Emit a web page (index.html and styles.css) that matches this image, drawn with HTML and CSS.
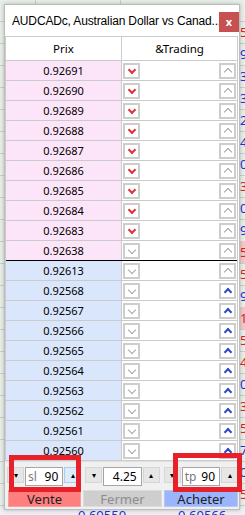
FILE: index.html
```html
<!DOCTYPE html>
<html lang="fr">
<head>
  <meta charset="UTF-8">
  <meta name="viewport" content="width=device-width, initial-scale=1.0">
  <title>AUDCADc</title>
  <link rel="stylesheet" href="styles.css">
</head>
<body>
  <div class="backdrop">
    <div class="sheet"></div>
    <div class="ticks">
      <span class="r">5</span><span class="b">9</span><span class="b">3</span><span class="b">3</span>
      <span class="b">2</span><span class="b">4</span><span class="b">0</span><span class="r">3</span>
      <span class="b">0</span><span class="b">9</span><span class="r hl">5</span><span class="r">5</span>
      <span class="b">9</span><span class="r hl">1</span><span class="r">5</span><span class="r">4</span>
      <span class="b">0</span><span class="r">3</span><span class="r">5</span><span class="b">7</span>
      <span class="b">0</span><span class="r">5</span><span class="b">2</span>
    </div>
    <div class="foot">
      <span>0.69550</span>
      <span>0.69566</span>
    </div>
  </div>

  <div class="window">
    <div class="titlebar">
      <span class="title">AUDCADc, Australian Dollar vs Canad...</span>
      <button class="close">x</button>
    </div>

    <div class="book">
      <div class="row head">
        <div class="price">Prix</div>
        <div class="trade">&amp;Trading</div>
      </div>

      <div class="row bid"><div class="price">0.92691</div><div class="trade"><i class="box dn red"></i><i class="box up gray"></i></div></div>
      <div class="row bid"><div class="price">0.92690</div><div class="trade"><i class="box dn red"></i><i class="box up gray"></i></div></div>
      <div class="row bid"><div class="price">0.92689</div><div class="trade"><i class="box dn red"></i><i class="box up gray"></i></div></div>
      <div class="row bid"><div class="price">0.92688</div><div class="trade"><i class="box dn red"></i><i class="box up gray"></i></div></div>
      <div class="row bid"><div class="price">0.92687</div><div class="trade"><i class="box dn red"></i><i class="box up gray"></i></div></div>
      <div class="row bid"><div class="price">0.92686</div><div class="trade"><i class="box dn red"></i><i class="box up gray"></i></div></div>
      <div class="row bid"><div class="price">0.92685</div><div class="trade"><i class="box dn red"></i><i class="box up gray"></i></div></div>
      <div class="row bid"><div class="price">0.92684</div><div class="trade"><i class="box dn red"></i><i class="box up gray"></i></div></div>
      <div class="row bid"><div class="price">0.92683</div><div class="trade"><i class="box dn red"></i><i class="box up gray"></i></div></div>
      <div class="row bid split"><div class="price">0.92638</div><div class="trade"><i class="box dn gray"></i><i class="box up gray"></i></div></div>

      <div class="row ask"><div class="price">0.92613</div><div class="trade"><i class="box dn gray"></i><i class="box up gray"></i></div></div>
      <div class="row ask"><div class="price">0.92568</div><div class="trade"><i class="box dn gray"></i><i class="box up blue"></i></div></div>
      <div class="row ask"><div class="price">0.92567</div><div class="trade"><i class="box dn gray"></i><i class="box up blue"></i></div></div>
      <div class="row ask"><div class="price">0.92566</div><div class="trade"><i class="box dn gray"></i><i class="box up blue"></i></div></div>
      <div class="row ask"><div class="price">0.92565</div><div class="trade"><i class="box dn gray"></i><i class="box up blue"></i></div></div>
      <div class="row ask"><div class="price">0.92564</div><div class="trade"><i class="box dn gray"></i><i class="box up blue"></i></div></div>
      <div class="row ask"><div class="price">0.92563</div><div class="trade"><i class="box dn gray"></i><i class="box up blue"></i></div></div>
      <div class="row ask"><div class="price">0.92562</div><div class="trade"><i class="box dn gray"></i><i class="box up blue"></i></div></div>
      <div class="row ask"><div class="price">0.92561</div><div class="trade"><i class="box dn gray"></i><i class="box up blue"></i></div></div>
      <div class="row ask"><div class="price">0.92560</div><div class="trade"><i class="box dn gray"></i><i class="box up blue"></i></div></div>
    </div>

    <div class="panel">
      <div class="spinners">
        <div class="spin">
          <button class="step">&#9662;</button>
          <div class="field"><span class="tag">sl</span><span class="val">90</span></div>
          <button class="step hot">&#9652;</button>
        </div>
        <div class="spin">
          <button class="step">&#9662;</button>
          <div class="field"><span class="val">4.25</span></div>
          <button class="step">&#9652;</button>
        </div>
        <div class="spin">
          <button class="step">&#9662;</button>
          <div class="field"><span class="tag">tp</span><span class="val">90</span></div>
          <button class="step">&#9652;</button>
        </div>
      </div>
      <div class="actions">
        <button class="act sell">Vente</button>
        <button class="act close-pos">Fermer</button>
        <button class="act buy">Acheter</button>
      </div>
    </div>
  </div>

  <div class="mark mark-sl"></div>
  <div class="mark mark-tp"></div>
</body>
</html>
```

FILE: styles.css
```css
body {
  margin: 0;
  width: 245px;
  height: 515px;
  overflow: hidden;
  font-family: 'Noto Sans', 'Liberation Sans', sans-serif;
  color: #000;
  background-color: #e8eee8;
}

button {
  font-family: inherit;
  padding: 0;
  margin: 0;
}


/* chart behind the window */
.backdrop {
  display: grid;
  grid-template-columns: 240px 1fr;
  grid-template-rows: 508px 7px;
  height: 515px;
  background-image: repeating-linear-gradient(to bottom, transparent 0, transparent 21px, #c9cfc9 21px, #c9cfc9 22px);
}

.sheet {
  background-image: linear-gradient(to right, transparent 35px, #c9cfc9 35px, #c9cfc9 36px, transparent 36px, transparent 120px, #c9cfc9 120px, #c9cfc9 121px, transparent 121px);
}

.ticks {
  display: flex;
  flex-direction: column;
  padding-top: 21px;
  font-size: 13px;
  line-height: 22px;
  overflow: hidden;
}

.ticks .r {
  color: #e02020;
}

.ticks .b {
  color: #2030d8;
}

.ticks .hl {
  background-color: #f1c9c9;
}

.foot {
  grid-column: 1 / 3;
  display: flex;
  gap: 52px;
  padding-left: 78px;
  font-size: 13px;
  line-height: 14px;
  color: #2030d8;
  background-color: #eef0f6;
}


/* terminal window */
.window {
  position: absolute;
  left: 4px;
  top: 4px;
  width: 236px;
  height: 506px;
  box-sizing: border-box;
  display: flex;
  flex-direction: column;
  background-color: #fff;
  border: 1px solid #bdbdbd;
  box-shadow: 0 0 4px rgba(0, 0, 0, 0.25);
}

.titlebar {
  display: flex;
  align-items: center;
  height: 31px;
  padding-left: 7px;
}

.title {
  flex: 1;
  min-width: 0;
  overflow: hidden;
  font-family: 'Liberation Sans', sans-serif;
  font-size: 12px;
  letter-spacing: -0.15px;
  white-space: nowrap;
  color: #000;
}

.close {
  flex-shrink: 0;
  margin-top: 2px;
  width: 20px;
  height: 20px;
  border: none;
  background-color: #c75050;
  color: #fff;
  font-size: 11px;
  font-weight: bold;
  line-height: 18px;
}


/* price ladder */
.book {
  border: 1px solid #cbcbcb;
  border-bottom: none;
  margin-right: 1px;
}

.row {
  display: flex;
  height: 20px;
  box-sizing: border-box;
  border-bottom: 1px solid #cbcbcb;
  font-size: 11px;
}

.row.head {
  height: 24px;
  font-size: 11.5px;
  background-color: #fff;
}

.row.split {
  border-bottom-color: #000;
}

.price {
  width: 115px;
  flex-shrink: 0;
  border-right: 1px solid #cbcbcb;
  text-align: center;
  line-height: 19px;
}

.head .price,
.head .trade {
  line-height: 23px;
  justify-content: center;
}

.bid .price {
  background-color: #fde5f9;
}

.ask .price {
  background-color: #dae6fb;
}

.trade {
  flex: 1;
  display: flex;
  justify-content: space-between;
  align-items: flex-start;
  padding: 2px 1px 0 1px;
  background-color: #fff;
}

.head .trade {
  padding: 0;
}

.box {
  width: 17px;
  height: 16px;
  box-sizing: border-box;
  display: flex;
  align-items: center;
  justify-content: center;
  border: 2px solid #cdcdcd;
  background-color: #fff;
}

.box::before {
  content: "";
  width: 4px;
  height: 4px;
  border-right: 2px solid currentColor;
  border-bottom: 2px solid currentColor;
}

.box.dn::before {
  transform: translateY(-1px) rotate(45deg);
}

.box.up::before {
  transform: translateY(1px) rotate(-135deg);
}

.box.gray::before {
  width: 5px;
  height: 5px;
  border-width: 1px;
}

.red {
  color: #e3303a;
}

.gray {
  color: #a4a4a4;
}

.blue {
  color: #2b48d0;
}


/* order panel */
.panel {
  flex: 1;
  padding: 5px 1px 0 2px;
  background-color: #f0f0f0;
  border-top: 1px solid #e0e0e0;
}

.spinners {
  display: grid;
  grid-template-columns: 1fr 1fr 1fr;
  gap: 4px;
  height: 16px;
}

.spin {
  display: flex;
}

.step {
  width: 17px;
  height: 16px;
  flex-shrink: 0;
  border: 1px solid #d6d6d6;
  background-color: #e6e6e6;
  color: #000;
  font-size: 8px;
  line-height: 14px;
}

.step.hot {
  background-color: #dcecfc;
  border-color: #a9cdf0;
}

.field {
  flex: 1;
  display: flex;
  align-items: center;
  justify-content: flex-end;
  margin: 0 1px;
  padding: 0 4px 0 2px;
  background-color: #fff;
  border: 1px solid #a5a5a5;
  font-size: 12px;
}

.field .tag {
  margin-right: auto;
  color: #7a7a7a;
}

.actions {
  display: grid;
  grid-template-columns: 73px 1fr 74px;
  gap: 2px;
  margin-top: 7px;
  padding-left: 1px;
}

.act {
  height: 17px;
  border: 1px solid transparent;
  font-size: 13px;
  line-height: 14px;
}

.sell {
  background-color: #ff7f7f;
  border-color: #f2a0a0;
  color: #1e1e1e;
}

.close-pos {
  background-color: #cecece;
  border-color: #dcdcdc;
  color: #8d8d8d;
}

.buy {
  background-color: #9ab5fc;
  border-color: #b5c8f5;
  color: #1e1e1e;
}


/* red annotation frames */
.mark {
  position: absolute;
  box-sizing: border-box;
  border: 5px solid #e8202a;
}

.mark-sl {
  left: 9px;
  top: 455px;
  width: 72px;
  height: 37px;
}

.mark-tp {
  left: 173px;
  top: 453px;
  width: 69px;
  height: 39px;
}
```
